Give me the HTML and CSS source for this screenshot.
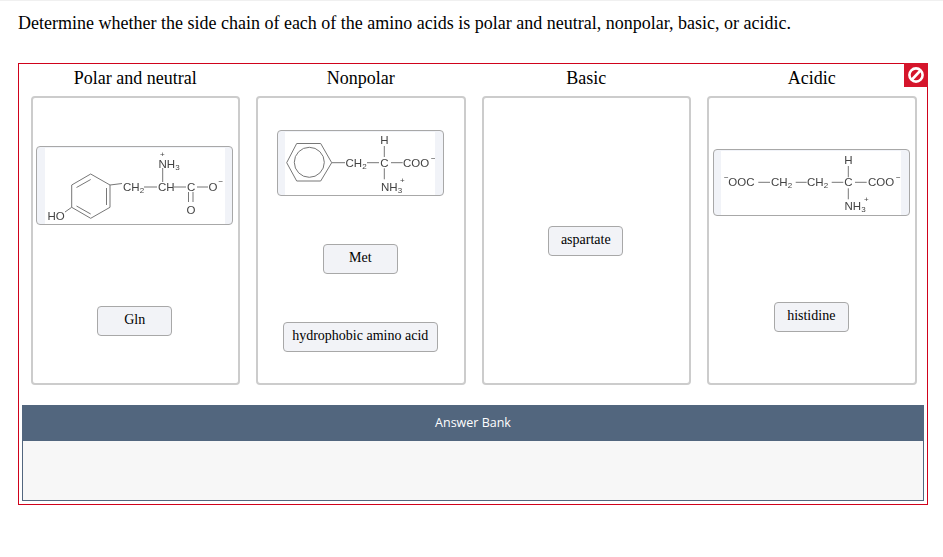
FILE: index.html
```html
<!DOCTYPE html>
<html lang="en">
<head>
<meta charset="utf-8">
<title>Amino acid side chains</title>
<link rel="stylesheet" href="styles.css">
</head>
<body>
<p class="prompt">Determine whether the side chain of each of the amino acids is polar and neutral, nonpolar, basic, or acidic.</p>
<section class="quiz">
  <div class="status" aria-label="Incorrect">
    <svg viewBox="0 0 24 24" width="24" height="24"><circle cx="12" cy="12" r="6.6" fill="none" stroke="#fff" stroke-width="2.6"/><path d="M8 16.5 16.5 7.5" stroke="#fff" stroke-width="2.6"/></svg>
  </div>
  <div class="heads">
    <h2>Polar and neutral</h2>
    <h2>Nonpolar</h2>
    <h2>Basic</h2>
    <h2>Acidic</h2>
  </div>
  <div class="zones">
    <div class="zone zone-polar">
      <div class="card card-tyr">
        <svg class="mol" viewBox="45 148 180 76" width="180" height="76">
          <g class="bonds">
            <path d="M90.7 174 110 185V207.3L90.7 218.3 71.7 207.3V185Z"/>
            <path d="M76.5 187.5 90.7 179.5M106.5 188V205M76.5 206 90.7 214"/>
            <path d="M110 185 122 183.5M144 187H157M174 187H186M197 187H208M188.5 192V202M193 192V202M162.7 168V182M65 212 71.7 207.3"/>
          </g>
          <text x="123" y="191">CH<tspan class="sub" dy="2">2</tspan></text>
          <text x="158" y="191">CH</text>
          <text x="186.9" y="191">C</text>
          <text x="208.5" y="191">O</text>
          <text class="sup" x="218.5" y="184">−</text>
          <text x="186.5" y="213.5">O</text>
          <text x="158.5" y="167.5">NH<tspan class="sub" dy="2">3</tspan></text>
          <text class="sup" x="160" y="157">+</text>
          <text x="47.5" y="219.5">HO</text>
        </svg>
      </div>
      <div class="chip">Gln</div>
    </div>
    <div class="zone zone-nonpolar">
      <div class="card card-phe">
        <svg class="mol" viewBox="285 132 150 63" width="150" height="63">
          <g class="bonds">
            <path d="M296.7 143.5H320.7L331.7 162.7 320.7 181H296.7L286.7 162.7Z"/>
            <circle cx="309.3" cy="162.3" r="15"/>
            <path d="M331.7 162.7H345M367 162.7H379M391 162.7H402.7M384.3 146V157M384.3 168.3V179.3"/>
          </g>
          <text x="345.5" y="167">CH<tspan class="sub" dy="2">2</tspan></text>
          <text x="380.2" y="167">C</text>
          <text x="403" y="167">COO</text>
          <text class="sup" x="431" y="161">−</text>
          <text x="380.2" y="144">H</text>
          <text x="381" y="190.5">NH<tspan class="sub" dy="2">3</tspan></text>
          <text class="sup" x="400" y="183">+</text>
        </svg>
      </div>
      <div class="chip">Met</div>
      <div class="chip">hydrophobic amino acid</div>
    </div>
    <div class="zone zone-basic">
      <div class="chip">aspartate</div>
    </div>
    <div class="zone zone-acidic">
      <div class="card card-glu">
        <svg class="mol" viewBox="721 151 180 64" width="180" height="64">
          <g class="bonds">
            <path d="M758.3 182.3H770M795.7 182.3H806.7M831.7 182.3H843.3M855 182.3H866.7M848.3 166V177.3M848.3 188.3V199.3"/>
          </g>
          <text class="sup" x="724" y="180">−</text>
          <text x="728.3" y="186.3">OOC</text>
          <text x="771" y="186.3">CH<tspan class="sub" dy="2">2</tspan></text>
          <text x="807" y="186.3">CH<tspan class="sub" dy="2">2</tspan></text>
          <text x="844.2" y="186.3">C</text>
          <text x="868" y="186.3">COO</text>
          <text class="sup" x="896" y="180">−</text>
          <text x="844.2" y="164">H</text>
          <text x="844.5" y="209.5">NH<tspan class="sub" dy="2">3</tspan></text>
          <text class="sup" x="864" y="202">+</text>
        </svg>
      </div>
      <div class="chip">histidine</div>
    </div>
  </div>
  <div class="bank">
    <div class="bank-title">Answer Bank</div>
    <div class="bank-body"></div>
  </div>
</section>
</body>
</html>
```
FILE: styles.css
```css
* { box-sizing: border-box; }
html, body { margin: 0; padding: 0; background: #fff; }
body {
  width: 943px;
  height: 557px;
  overflow: hidden;
  padding: 0 15px 0 18px;
  border-top: 1px solid #f0f0f0;
  font-family: "Liberation Serif", "Times New Roman", serif;
  color: #000;
}
.prompt {
  margin: 0;
  padding-top: 12px;
  height: 62px;
  font-size: 18px;
  line-height: 21px;
}
.quiz {
  position: relative;
  width: 910px;
  height: 442px;
  border: 1px solid #d0021b;
}
.status {
  position: absolute;
  top: -1px;
  right: -1px;
  width: 24px;
  height: 24px;
  background: #d5152b;
}
.status svg { display: block; }
.heads, .zones {
  display: grid;
  grid-template-columns: repeat(4, 209.5px);
  column-gap: 16px;
  padding-left: 11.5px;
}
.heads { height: 32px; }
.heads h2 {
  margin: 0;
  padding-top: 4px;
  font-size: 18px;
  line-height: 21px;
  font-weight: 400;
  text-align: center;
}
.zone {
  display: flex;
  flex-direction: column;
  align-items: center;
  height: 289px;
  padding-right: 1px;
  border: 2px solid #ccc;
  border-radius: 4px;
}
.zone-polar { padding-top: 48px; gap: 81px; }
.zone-nonpolar { padding-top: 32px; gap: 48px; }
.zone-basic { padding-top: 128px; }
.zone-acidic { padding-top: 51px; gap: 86px; }
.card {
  display: flex;
  justify-content: center;
  align-items: center;
  background: #f1f3f8;
  border: 1px solid #a8a8a8;
  border-radius: 4px;
}
.card-tyr { width: 197px; height: 79px; }
.card-phe { width: 167px; height: 66px; }
.card-glu { width: 197px; height: 67px; }
.mol { display: block; background: #fff; filter: blur(0.3px); }
.bonds { fill: none; stroke: #777; stroke-width: 1; }
.mol text {
  font-family: "Liberation Sans", Arial, sans-serif;
  font-size: 11.5px;
  fill: #444;
}
.mol .sup { font-size: 8px; }
.mol .sub { font-size: 8px; }
.chip {
  min-width: 75px;
  height: 30px;
  padding: 0 8.5px;
  background: #f2f3f7;
  border: 1px solid #a8a8a8;
  border-radius: 4px;
  font-size: 14px;
  line-height: 26px;
  text-align: center;
}
.bank {
  width: 902px;
  margin: 20px 0 0 3px;
}
.bank-title {
  height: 36px;
  background: #52667e;
  color: #fff;
  font-family: "Open Sans", sans-serif;
  font-size: 12.5px;
  line-height: 36px;
  text-align: center;
}
.bank-body {
  height: 60px;
  background: #f7f7f7;
  border: 1px solid #52667e;
  border-top: 0;
}
```
